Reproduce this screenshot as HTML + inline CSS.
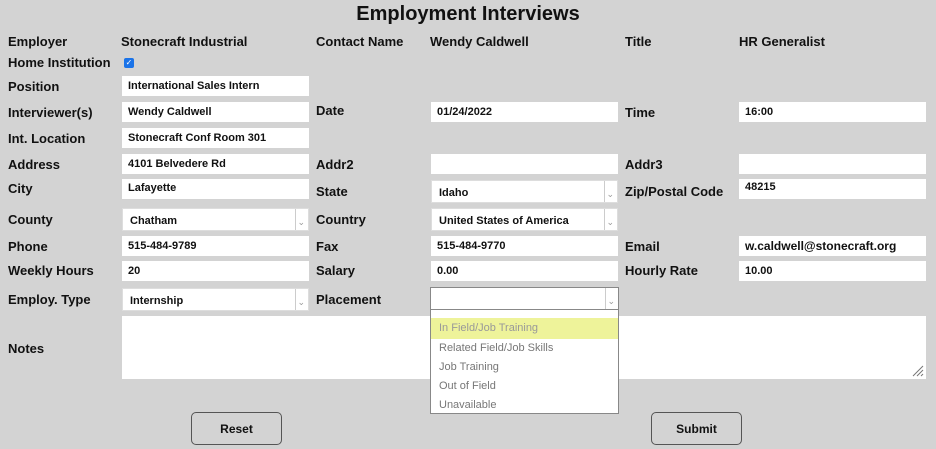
<!DOCTYPE html>
<html><head><style>
body{margin:0;width:936px;height:449px;background:#d3d3d3;position:relative;overflow:hidden;font-family:"Liberation Sans",sans-serif;color:#111}
.a{position:absolute}
.l{position:absolute;font-weight:bold;font-size:13px;line-height:16px;white-space:nowrap}
.i{position:absolute;background:#fff;height:20px;font-size:11px;font-weight:bold;line-height:21px;padding-left:6px;box-sizing:border-box;white-space:nowrap}
.s{position:absolute;background:#fff;height:23px;font-size:11px;font-weight:bold;line-height:25px;padding-left:7px;box-sizing:border-box;border:1px solid #ddd}
.s:after{content:"";position:absolute;right:0;top:0;width:12px;height:21px;border-left:1px solid #ccc;}
.s b{position:absolute;right:3px;top:1px;font-size:9px;color:#999;font-weight:normal;z-index:2}
.btn{position:absolute;border:1px solid #555;border-radius:5px;width:91px;height:33px;box-sizing:border-box;text-align:center;line-height:33px;font-size:12px;font-weight:bold}
.o{position:absolute;left:8px;font-size:11px;color:#777}
</style></head><body>
<div class="a" style="left:0;width:936px;top:3px;text-align:center;font-weight:bold;font-size:20px">Employment Interviews</div>

<div class="l" style="left:8px;top:34px">Employer</div>
<div class="l" style="left:121px;top:34px">Stonecraft Industrial</div>
<div class="l" style="left:316px;top:34px">Contact Name</div>
<div class="l" style="left:430px;top:34px">Wendy Caldwell</div>
<div class="l" style="left:625px;top:34px">Title</div>
<div class="l" style="left:739px;top:34px">HR Generalist</div>

<div class="l" style="left:8px;top:55px">Home Institution</div>
<div class="a" style="left:124px;top:58px;width:10px;height:10px;background:#1a73e8;border-radius:2px;color:#fff;font-size:8px;line-height:10px;text-align:center">✓</div>

<div class="l" style="left:8px;top:79px">Position</div>
<div class="i" style="left:122px;top:76px;width:187px">International Sales Intern</div>

<div class="l" style="left:8px;top:105px">Interviewer(s)</div>
<div class="i" style="left:122px;top:102px;width:187px">Wendy Caldwell</div>
<div class="l" style="left:316px;top:103px">Date</div>
<div class="i" style="left:431px;top:102px;width:187px">01/24/2022</div>
<div class="l" style="left:625px;top:105px">Time</div>
<div class="i" style="left:739px;top:102px;width:187px">16:00</div>

<div class="l" style="left:8px;top:131px">Int. Location</div>
<div class="i" style="left:122px;top:128px;width:187px">Stonecraft Conf Room 301</div>

<div class="l" style="left:8px;top:157px">Address</div>
<div class="i" style="left:122px;top:154px;width:187px">4101 Belvedere Rd</div>
<div class="l" style="left:316px;top:157px">Addr2</div>
<div class="i" style="left:431px;top:154px;width:187px"></div>
<div class="l" style="left:625px;top:157px">Addr3</div>
<div class="i" style="left:739px;top:154px;width:187px"></div>

<div class="l" style="left:8px;top:181px">City</div>
<div class="i" style="left:122px;top:179px;width:187px;line-height:18px">Lafayette</div>
<div class="l" style="left:316px;top:184px">State</div>
<div class="s" style="left:431px;top:180px;width:187px">Idaho<b>⌄</b></div>
<div class="l" style="left:625px;top:184px">Zip/Postal Code</div>
<div class="i" style="left:739px;top:179px;width:187px;line-height:17px">48215</div>

<div class="l" style="left:8px;top:212px">County</div>
<div class="s" style="left:122px;top:208px;width:187px">Chatham<b>⌄</b></div>
<div class="l" style="left:316px;top:212px">Country</div>
<div class="s" style="left:431px;top:208px;width:187px">United States of America<b>⌄</b></div>

<div class="l" style="left:8px;top:239px">Phone</div>
<div class="i" style="left:122px;top:236px;width:187px">515-484-9789</div>
<div class="l" style="left:316px;top:239px">Fax</div>
<div class="i" style="left:431px;top:236px;width:187px">515-484-9770</div>
<div class="l" style="left:625px;top:239px">Email</div>
<div class="i" style="left:739px;top:236px;width:187px;font-size:12px">w.caldwell@stonecraft.org</div>

<div class="l" style="left:8px;top:263px">Weekly Hours</div>
<div class="i" style="left:122px;top:261px;width:187px">20</div>
<div class="l" style="left:316px;top:263px">Salary</div>
<div class="i" style="left:431px;top:261px;width:187px">0.00</div>
<div class="l" style="left:625px;top:263px">Hourly Rate</div>
<div class="i" style="left:739px;top:261px;width:187px">10.00</div>

<div class="l" style="left:8px;top:292px">Employ. Type</div>
<div class="s" style="left:122px;top:288px;width:187px">Internship<b>⌄</b></div>
<div class="l" style="left:316px;top:292px">Placement</div>
<div class="s" style="left:430px;top:287px;width:189px;border-color:#888"><b>⌄</b></div>

<div class="l" style="left:8px;top:341px">Notes</div>
<div class="i" style="left:122px;top:316px;width:804px;height:63px"></div>
<svg class="a" style="left:912px;top:365px" width="12" height="12"><path d="M11 1L1 11M11 5L5 11M11 9L9 11" stroke="#777" stroke-width="1"/></svg>

<div class="a" style="left:430px;top:310px;width:189px;height:104px;background:#fff;border:1px solid #888;border-top:none;box-sizing:border-box">
<div class="a" style="left:0;top:8px;width:187px;height:21px;background:#eef39a"></div>
<div class="o" style="top:12px;color:#999">In Field/Job Training</div>
<div class="o" style="top:32px">Related Field/Job Skills</div>
<div class="o" style="top:51px">Job Training</div>
<div class="o" style="top:70px">Out of Field</div>
<div class="o" style="top:89px">Unavailable</div>
</div>

<div class="btn" style="left:191px;top:412px">Reset</div>
<div class="btn" style="left:651px;top:412px">Submit</div>
</body></html>
